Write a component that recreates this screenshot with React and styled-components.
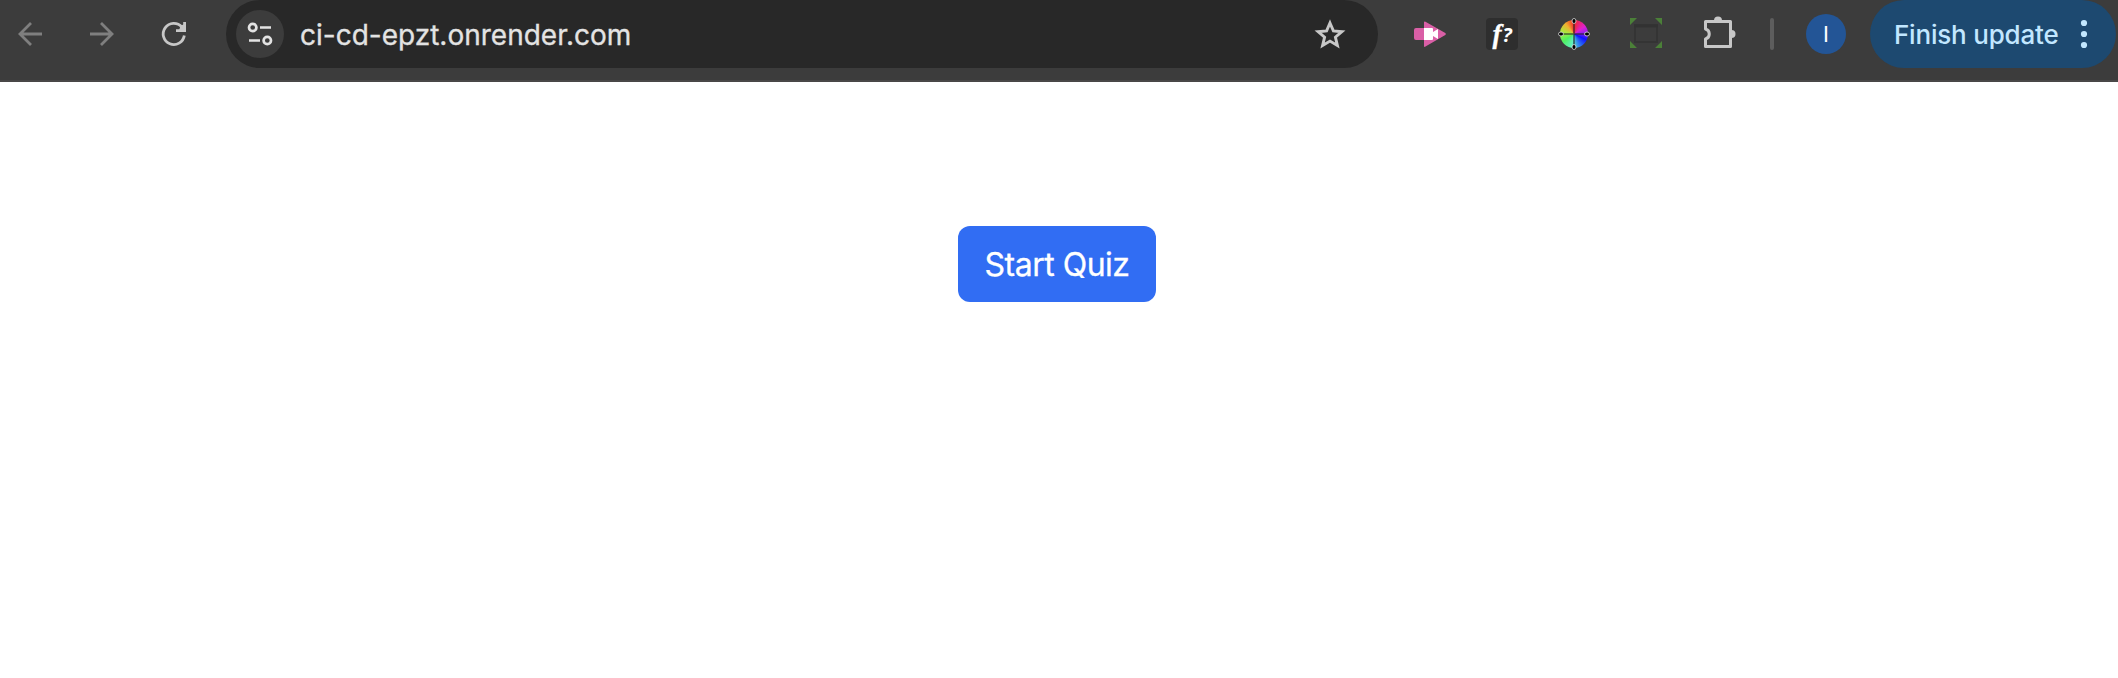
import React from "react";
import styled, { createGlobalStyle } from "styled-components";

const GlobalStyle = createGlobalStyle`
  body {
    margin: 0;
    background: #ffffff;
    font-family: Inter, "Liberation Sans", sans-serif;
  }
`;

const Page = styled.div`
  display: flex;
  flex-direction: column;
  height: 678px;
  overflow: hidden;
`;

const Toolbar = styled.header`
  display: flex;
  align-items: flex-start;
  box-sizing: border-box;
  height: 82px;
  flex: none;
  background: #3c3c3c;
  border-bottom: 2px solid #494747;
`;

const Group = styled.div`
  display: flex;
  align-items: center;
  height: 68px;
  flex: none;
  gap: ${(p) => p.$gap}px;
  padding: 0 ${(p) => p.$right}px 0 ${(p) => p.$left}px;
`;

const Icon = styled.svg`
  display: block;
  flex: none;
  overflow: visible;
`;

const AddressBar = styled.div`
  display: flex;
  align-items: center;
  box-sizing: border-box;
  width: 1152px;
  height: 68px;
  flex: none;
  padding: 0 32px 0 10px;
  border-radius: 34px;
  background: #282828;
`;

const SiteInfo = styled.button`
  display: grid;
  place-items: center;
  width: 48px;
  height: 48px;
  padding: 0;
  border: 0;
  border-radius: 50%;
  background: #3c3c3c;
`;

const Url = styled.span`
  flex: 1;
  margin-left: 16px;
  padding-top: 1px;
  font-size: 28px;
  line-height: 34px;
  color: #e3e3e3;
  -webkit-text-stroke: 0.3px currentColor;
  white-space: nowrap;
`;

const Wheel = styled.div`
  display: grid;
  place-items: center;
  width: 28px;
  height: 28px;
  margin: 0 2px;
  border-radius: 50%;
  background: conic-gradient(#f02828, #e020d0 55deg, #9020f0 85deg, #1010ff 115deg, #3080f0 155deg, #60f0c0 190deg, #50f060 235deg, #a0f040 275deg, #f0b030 320deg, #f02828 360deg);
`;

const Separator = styled.div`
  width: 4px;
  height: 32px;
  border-radius: 2px;
  background: #5d5d5d;
`;

const Avatar = styled.div`
  display: grid;
  place-items: center;
  width: 40px;
  height: 40px;
  margin: 0 24px 0 32px;
  border-radius: 50%;
  background: #235596;
  color: #ffffff;
  font-size: 22px;
  line-height: 40px;
`;

const UpdateButton = styled.button`
  display: flex;
  align-items: center;
  justify-content: space-between;
  box-sizing: border-box;
  width: 246px;
  height: 68px;
  padding: 0 28px 0 24px;
  border: 0;
  border-radius: 34px;
  background: #1d4970;
  color: #c2e7ff;
  font: 500 26px/34px Inter, sans-serif;
  letter-spacing: -0.2px;
  white-space: nowrap;
`;

const UpdateLabel = styled.span`
  padding-top: 2px;
`;

const Content = styled.main`
  display: flex;
  justify-content: center;
  align-items: flex-start;
  padding: 144px 4px 0 0;
`;

const StartButton = styled.button`
  width: 198px;
  height: 76px;
  padding: 2px 0 0;
  border: 0;
  border-radius: 12px;
  background: #316df3;
  color: #ffffff;
  font: 400 32px/48px Inter, sans-serif;
  letter-spacing: -0.5px;
  -webkit-text-stroke: 0.3px currentColor;
  white-space: nowrap;
`;

const FontTile = styled.div`
  display: flex;
  align-items: center;
  justify-content: center;
  gap: 1px;
  width: 32px;
  height: 32px;
  border-radius: 4px;
  background: #2e2e2e;
  color: #ffffff;
`;

const LetterF = styled.span`
  font: italic 700 27px/32px "Liberation Serif", serif;
  -webkit-text-stroke: 0.3px currentColor;
`;

const QuestionMark = styled.span`
  padding-top: 2px;
  font: italic 700 20px/30px "Open Sans", sans-serif;
`;

const Back = () => (
  <Icon width="24" height="24" viewBox="0 0 24 24" fill="none" stroke="#7f7f7f" strokeWidth="2.8">
    <path d="M24 12H2M13 1 2 12l11 11" />
  </Icon>
);

const Forward = () => (
  <Icon width="24" height="24" viewBox="0 0 24 24" fill="none" stroke="#7f7f7f" strokeWidth="2.8">
    <path d="M0 12h22M11 1l11 11-11 11" />
  </Icon>
);

const Reload = () => (
  <Icon width="24" height="24" viewBox="0 0 24 24" fill="none" stroke="#c7c7c7" strokeWidth="2.8">
    <path d="M22.3 13.5A10.6 10.6 0 1 1 19.8 5l2.4 3M22.6 0v8.6H14" />
    <path d="M18.5 3.8 22.6 2v6.6H17z" fill="#c7c7c7" stroke="none" />
  </Icon>
);

const Tune = () => (
  <Icon width="26" height="24" viewBox="0 0 26 24" fill="none" stroke="#e3e3e3" strokeWidth="2.7">
    <circle cx="5.7" cy="5.5" r="3.7" />
    <circle cx="20.3" cy="18.5" r="3.7" />
    <path d="M13 5.5h11M2 18.5h11" />
  </Icon>
);

const Star = () => (
  <Icon width="32" height="32" viewBox="0 0 32 32" fill="none" stroke="#c7c7c7" strokeWidth="2.9">
    <path d="M16 5l3.4 7.9 8.5.8-6.5 5.5 2 8.3-7.4-4.4-7.4 4.4 2-8.3-6.5-5.5 8.5-.8z" />
  </Icon>
);

const Video = () => (
  <Icon width="32" height="32" viewBox="0 0 32 32">
    <path d="M0 12q0-2 2-2h8V4.5q0-1.5 1.5-.8L31.3 15q1.3 1 0 2L11.5 28.6Q10 29.5 10 28v-6H2q-2 0-2-2z" fill="#d95fa6" />
    <path d="M10 10h8q1 0 1 1v3l5-3v10l-5-3v3q0 1-1 1h-8z" fill="#fff" />
  </Icon>
);

const Crosshair = () => (
  <Icon width="28" height="28" viewBox="0 0 28 28">
    <path d="M14 1v26M1 14h26" stroke="#222" strokeOpacity=".7" strokeWidth="1.6" />
    <g fill="#000" stroke="#ddd" strokeWidth=".8">
      <ellipse cx="14" cy="1" rx="2" ry="2.5" />
      <ellipse cx="14" cy="27" rx="2" ry="2.5" />
      <ellipse cx="1" cy="14" rx="2.5" ry="2" />
      <ellipse cx="27" cy="14" rx="2.5" ry="2" />
    </g>
  </Icon>
);

const Capture = () => (
  <Icon width="32" height="32" viewBox="0 0 32 32">
    <path d="M0 0h7L0 7zM25 0h7v7zM0 30v-7l7 7zM32 30v-7l-7 7z" fill="#4b8038" />
    <rect x="5" y="7" width="22" height="17" fill="none" stroke="#343434" strokeWidth="2" />
    <path d="M4 8h24" stroke="#323232" strokeWidth="3" />
  </Icon>
);

const Puzzle = () => (
  <Icon width="32" height="32" viewBox="0 0 32 32">
    <path d="M5 3.5h23.5V28.5H3.5V21a5.2 5.2 0 0 0 0-10V3.5z" fill="none" stroke="#c7c7c7" strokeWidth="3" strokeLinejoin="round" />
    <path d="M12 2.5a4 4 0 0 1 8 0zM29.5 12a4 4 0 0 1 0 8z" fill="#c7c7c7" />
  </Icon>
);

const Dots = () => (
  <Icon width="8" height="28" viewBox="0 0 8 28" fill="#c2e7ff">
    <circle cx="4" cy="3" r="3.1" />
    <circle cx="4" cy="14" r="3.1" />
    <circle cx="4" cy="25" r="3.1" />
  </Icon>
);

export default function App() {
  return (
    <Page>
      <GlobalStyle />
      <Toolbar>
        <Group $gap={48} $left={18} $right={40}>
          <Back />
          <Forward />
          <Reload />
        </Group>
        <AddressBar>
          <SiteInfo aria-label="Site information"><Tune /></SiteInfo>
          <Url>ci-cd-epzt.onrender.com</Url>
          <Star />
        </AddressBar>
        <Group $gap={40} $left={36} $right={36}>
          <Video />
          <FontTile>
            <LetterF>f</LetterF>
            <QuestionMark>?</QuestionMark>
          </FontTile>
          <Wheel><Crosshair /></Wheel>
          <Capture />
          <Puzzle />
        </Group>
        <Group $gap={0} $left={0} $right={0}>
          <Separator />
          <Avatar>I</Avatar>
          <UpdateButton>
            <UpdateLabel>Finish update</UpdateLabel>
            <Dots />
          </UpdateButton>
        </Group>
      </Toolbar>
      <Content>
        <StartButton>Start Quiz</StartButton>
      </Content>
    </Page>
  );
}
